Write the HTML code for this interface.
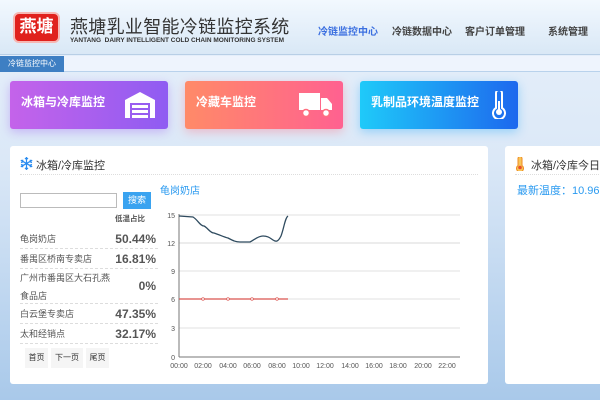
<!DOCTYPE html>
<html><head><meta charset="utf-8"><style>
*{margin:0;padding:0;box-sizing:border-box}
body{width:600px;height:400px;overflow:hidden;font-family:"Liberation Sans","Noto Sans CJK SC",sans-serif;background:linear-gradient(180deg,#e8f1fb 0%,#dbe8f7 40%,#a9c9ea 100%);position:relative}
.abs{position:absolute}
.hdr{left:0;top:0;width:600px;height:55px;background:linear-gradient(180deg,#f2f8fe,#d9e8f6);border-bottom:1px solid #b8cfe6}
.logo{left:13px;top:12px;width:47px;height:31px;background:#e0211d;border-radius:6px;color:#fff;font-size:17px;font-weight:bold;text-align:center;line-height:26px;border:2px solid #f6b7b3}
.title{left:70px;top:13px;font-size:18px;color:#333;letter-spacing:0.3px;white-space:nowrap}
.sub{left:70px;top:37px;font-size:6.5px;color:#333;white-space:nowrap;font-weight:bold}
.nav{top:23px;font-size:10px;color:#444;font-weight:bold;white-space:nowrap}
.tabbar{left:0;top:56px;width:600px;height:16px;background:#eef4fd;border-bottom:1px solid #b9d2ec}
.tab{left:0;top:56px;width:64px;height:16px;background:#3e7fc3;color:#fff;font-size:8px;line-height:16px;text-align:center}
.card{top:81px;height:48px;width:158px;border-radius:3px;color:#fff;font-size:12px;font-weight:bold;padding:12px 0 0 11px}
.panel{background:#fff;border-radius:3px}
.ph{font-size:11px;color:#333}
.row{left:20px;width:138px;border-bottom:1px dashed #ddd;font-size:9px;color:#555}
.pct{position:absolute;right:2px;font-size:12px;font-weight:bold;color:#555}
.btn{top:348px;height:20px;background:#f5f5f5;font-size:8px;color:#333;line-height:20px;text-align:center}
.tk{font-size:7px;fill:#555;font-family:"Liberation Sans",sans-serif}
</style></head><body>
<div class="abs hdr"></div>
<div class="abs logo">燕塘</div>
<div class="abs title">燕塘乳业智能冷链监控系统</div>
<div class="abs sub">YANTANG &nbsp;DAIRY INTELLIGENT COLD CHAIN MONITORING SYSTEM</div>
<div class="abs nav" style="left:318px;color:#3b6fe0">冷链监控中心</div>
<div class="abs nav" style="left:392px">冷链数据中心</div>
<div class="abs nav" style="left:465px">客户订单管理</div>
<div class="abs nav" style="left:548px">系统管理</div>
<div class="abs tabbar"></div>
<div class="abs tab">冷链监控中心</div>

<div class="abs card" style="left:10px;background:linear-gradient(90deg,#c463ea,#8f5cf2);box-shadow:0 3px 10px rgba(160,100,240,.4)">冰箱与冷库监控
<svg class="abs" style="left:114px;top:10px" width="32" height="27" viewBox="0 0 32 27"><path d="M1 9 L16 1 L31 9 V27 H26 V12 H6 V27 H1Z" fill="#fff"/><rect x="8" y="14" width="16" height="3" fill="#fff"/><rect x="8" y="19" width="16" height="3" fill="#fff"/><rect x="8" y="24" width="16" height="3" fill="#fff"/></svg></div>
<div class="abs card" style="left:185px;background:linear-gradient(90deg,#ff8a68,#ff6190);box-shadow:0 3px 10px rgba(255,110,130,.4)">冷藏车监控
<svg class="abs" style="left:114px;top:12px" width="34" height="24" viewBox="0 0 34 24"><rect x="0" y="0" width="21" height="17" fill="#fff"/><path d="M22 5 H28 L33 11 V17 H22Z" fill="#fff"/><circle cx="7" cy="20" r="3.5" fill="#fff" stroke="#ff6f80" stroke-width="1.5"/><circle cx="27" cy="20" r="3.5" fill="#fff" stroke="#ff6f80" stroke-width="1.5"/></svg></div>
<div class="abs card" style="left:360px;background:linear-gradient(90deg,#1fcaf9,#1d68ee);box-shadow:0 3px 10px rgba(40,170,250,.4)">乳制品环境温度监控
<svg class="abs" style="left:132px;top:10px" width="14" height="28" viewBox="0 0 14 28"><path d="M4 2 A3 3 0 0 1 10 2 V17 A6 6 0 1 1 4 17Z" fill="none" stroke="#fff" stroke-width="2"/><circle cx="7" cy="21" r="3" fill="#fff"/><rect x="6" y="10" width="2" height="10" fill="#fff"/></svg></div>

<div class="abs panel" style="left:10px;top:146px;width:478px;height:238px"></div>
<svg class="abs" style="left:20px;top:157px" width="13" height="13" viewBox="0 0 13 13" stroke="#2a8cf0" stroke-width="1.2" fill="none"><path d="M6.5 0V13M0.8 3.2L12.2 9.8M0.8 9.8L12.2 3.2M5 1L6.5 2.5L8 1M5 12L6.5 10.5L8 12M1 5.5L3 4.8L2.6 2.8M12 5.5L10 4.8L10.4 2.8M1 7.5L3 8.2L2.6 10.2M12 7.5L10 8.2L10.4 10.2"/></svg>
<div class="abs ph" style="left:36px;top:157px">冰箱/冷库监控</div>
<div class="abs" style="left:20px;top:174px;width:458px;border-top:1px dotted #ddd"></div>
<div class="abs" style="left:20px;top:193px;width:97px;height:15px;border:1px solid #bbb"></div>
<div class="abs" style="left:123px;top:192px;width:28px;height:17px;background:#3aa3f0;color:#fff;font-size:9px;text-align:center;line-height:17px">搜索</div>
<div class="abs" style="left:115px;top:213px;font-size:7.5px;color:#555;font-weight:bold">低温占比</div>
<div class="abs row" style="top:229px;height:20px;line-height:20px">龟岗奶店<span class="pct">50.44%</span></div>
<div class="abs row" style="top:249px;height:20px;line-height:20px">番禺区桥南专卖店<span class="pct">16.81%</span></div>
<div class="abs row" style="top:269px;height:35px;line-height:18px">广州市番禺区大石孔燕<br>食品店<span class="pct" style="top:8px">0%</span></div>
<div class="abs row" style="top:304px;height:20px;line-height:20px">白云堡专卖店<span class="pct">47.35%</span></div>
<div class="abs row" style="top:324px;height:20px;line-height:20px">太和经销点<span class="pct">32.17%</span></div>
<div class="abs btn" style="left:25px;width:23px">首页</div>
<div class="abs btn" style="left:51px;width:32px">下一页</div>
<div class="abs btn" style="left:86px;width:23px">尾页</div>
<div class="abs" style="left:160px;top:182px;font-size:10px;color:#2a9af0">龟岗奶店</div>

<svg class="abs" style="left:0;top:0" width="600" height="400">
<g stroke="#e2e2e2" stroke-width="1">
<line x1="179" y1="215" x2="460" y2="215"/><line x1="179" y1="243" x2="460" y2="243" stroke-width="2" stroke="#ececec"/><line x1="179" y1="271" x2="460" y2="271"/><line x1="179" y1="299" x2="460" y2="299"/><line x1="179" y1="328" x2="460" y2="328"/>
<line x1="532" y1="238" x2="600" y2="238"/><line x1="532" y1="262" x2="600" y2="262"/><line x1="532" y1="286" x2="600" y2="286"/><line x1="532" y1="309" x2="600" y2="309"/><line x1="532" y1="333" x2="600" y2="333"/>
</g>
<g stroke="#777" stroke-width="1"><line x1="179" y1="214" x2="179" y2="357"/><line x1="179" y1="357" x2="460" y2="357"/><line x1="532" y1="214" x2="532" y2="357"/><line x1="532" y1="357" x2="600" y2="357"/></g>
<g class="tk" text-anchor="end"><text x="175" y="218">15</text><text x="175" y="246">12</text><text x="175" y="274">9</text><text x="175" y="302">6</text><text x="175" y="331">3</text><text x="175" y="360">0</text>
<text x="528" y="217">12</text><text x="528" y="241">10</text><text x="528" y="265">8</text><text x="528" y="289">6</text><text x="528" y="312">4</text><text x="528" y="336">2</text><text x="528" y="360">0</text></g>
<g class="tk" text-anchor="middle"><text x="179" y="368">00:00</text><text x="203" y="368">02:00</text><text x="228" y="368">04:00</text><text x="252" y="368">06:00</text><text x="277" y="368">08:00</text><text x="301" y="368">10:00</text><text x="325" y="368">12:00</text><text x="350" y="368">14:00</text><text x="374" y="368">16:00</text><text x="398" y="368">18:00</text><text x="423" y="368">20:00</text><text x="447" y="368">22:00</text>
<text x="533" y="368">00:00</text><text x="557" y="368">04:00</text><text x="580" y="368">08:00</text><text x="600" y="368">1</text></g>
<path d="M179 216 L193 217 C198 220 200 226 204 226 C208 228 210 233 214 233 C220 235 224 237 228 238 C232 240 235 242 240 242 L250 242 C254 240 258 236 263 236 C268 236 270 238 273 240 C276 242 278 242 281 236 C284 228 285 218 288 216" fill="none" stroke="#2f4b5f" stroke-width="1.3"/>
<line x1="179" y1="299" x2="288" y2="299" stroke="#d9534f" stroke-width="1.3"/>
<g fill="#fff" stroke="#d9534f" stroke-width=".7"><circle cx="203" cy="299" r="1.3"/><circle cx="228" cy="299" r="1.3"/><circle cx="252" cy="299" r="1.3"/><circle cx="277" cy="299" r="1.3"/></g>
<path d="M532 221 L539 221 C542 222 544 225 547 225 C550 224 552 224 555 225 C558 227 560 226 563 225 C566 226 567 228 570 229 C573 228 575 227 578 225 C580 222 581 222 583 224 L586 226" fill="none" stroke="#2a93f0" stroke-width="1.3"/>
</svg>

<div class="abs panel" style="left:505px;top:146px;width:110px;height:238px"></div>
<svg class="abs" style="left:516px;top:157px" width="8" height="14" viewBox="0 0 8 14"><path d="M2 1.5 A2 2 0 0 1 6 1.5 V8.5 A3.5 3.5 0 1 1 2 8.5Z" fill="#f7c65a" stroke="#f08a20" stroke-width="1"/><circle cx="4" cy="10.5" r="1.8" fill="#e94d2c"/></svg>
<div class="abs ph" style="left:531px;top:157px;white-space:nowrap">冰箱/冷库今日平</div>
<div class="abs" style="left:515px;top:174px;width:90px;border-top:1px dotted #ddd"></div>
<div class="abs" style="left:517px;top:182px;font-size:11px;color:#2a9af0;white-space:nowrap">最新温度：10.96℃</div>
</body></html>
